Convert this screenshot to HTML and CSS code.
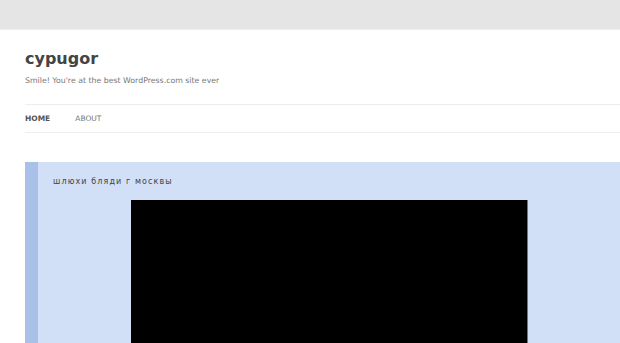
FILE: index.html
```html
<!DOCTYPE html>
<html>
<head>
    <title>cypugor</title>
    <link rel="stylesheet" href="styles.css">
</head>
<body>
    <div class="topbar"></div>
    <div class="page">
        <header class="site-header">
            <h1 class="site-title">cypugor</h1>
            <p class="site-description">Smile! You're at the best WordPress.com site ever</p>
        </header>
        <nav class="main-nav">
            <a class="current" href="#">HOME</a>
            <a href="#">ABOUT</a>
        </nav>
        <div class="post">
            <h2 class="post-title">шлюхи бляди г москвы</h2>
            <div class="video"></div>
        </div>
    </div>
</body>
</html>
```

FILE: styles.css
```css
body {
    margin: 0;
    font-family: "DejaVu Sans", sans-serif;
    color: #444;
    background: #fff;
    overflow: hidden;
}
.topbar {
    height: 29px;
    background: #e5e5e5;
    border-bottom: 1px solid #efefef;
}
.page {
    padding-left: 25px;
}
.site-header {
    padding: 19px 0 17px;
}
.site-title {
    margin: 0;
    font-size: 16px;
    font-weight: bold;
    line-height: 20px;
    color: #444;
}
.site-description {
    margin: 6px 0 0;
    font-size: 7.8px;
    line-height: 12px;
    color: #777;
}
.main-nav {
    display: flex;
    gap: 25px;
    height: 27px;
    align-items: center;
    border-top: 1px solid #ededed;
    border-bottom: 1px solid #ededed;
}
.main-nav a {
    font-size: 7.5px;
    color: #777;
    text-decoration: none;
}
.main-nav a.current {
    color: #555;
    font-weight: bold;
}
.post {
    margin-top: 29px;
    background: #d1dff7;
    border-left: 13px solid #a9c0e8;
    padding: 14px 0 0 15px;
    height: 300px;
}
.post-title {
    margin: 0;
    font-size: 8px;
    font-weight: normal;
    line-height: 12px;
    letter-spacing: 1.1px;
    color: #444;
}
.video {
    margin: 12px 0 0 78px;
    width: 396px;
    height: 200px;
    background: #000;
    border-right: 1px solid #6d7584;
}
```
